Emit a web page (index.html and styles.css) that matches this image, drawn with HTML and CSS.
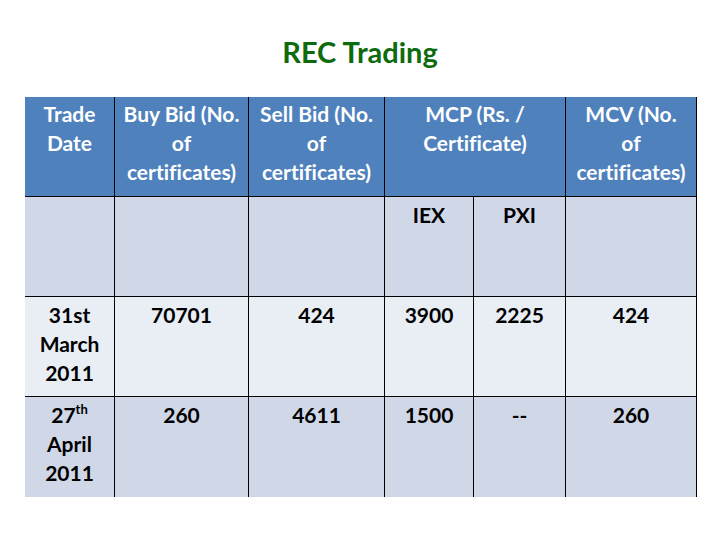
FILE: index.html
```html
<!DOCTYPE html>
<html lang="en">
<head>
<meta charset="utf-8">
<title>REC Trading</title>
<link rel="stylesheet" href="styles.css">
</head>
<body>
<main class="slide">
  <h1 class="title">REC Trading</h1>
  <table class="rec">
    <colgroup>
      <col class="c1"><col class="c2"><col class="c3"><col class="c4"><col class="c5"><col class="c6">
    </colgroup>
    <thead>
      <tr class="head">
        <th>Trade<br>Date</th>
        <th>Buy Bid (No.<br>of<br>certificates)</th>
        <th>Sell Bid (No.<br>of<br>certificates)</th>
        <th colspan="2">MCP (Rs. /<br>Certificate)</th>
        <th>MCV (No.<br>of<br>certificates)</th>
      </tr>
    </thead>
    <tbody>
      <tr class="sub dark">
        <td></td><td></td><td></td><td>IEX</td><td>PXI</td><td></td>
      </tr>
      <tr class="light">
        <td>31st<br>March<br>2011</td><td>70701</td><td>424</td><td>3900</td><td>2225</td><td>424</td>
      </tr>
      <tr class="dark last">
        <td>27<sup>th</sup><br>April<br>2011</td><td>260</td><td>4611</td><td>1500</td><td>--</td><td>260</td>
      </tr>
    </tbody>
  </table>
</main>
</body>
</html>
```

FILE: styles.css
```css
html, body {
  margin: 0;
  padding: 0;
  background: #ffffff;
}

.slide {
  width: 720px;
  height: 540px;
  box-sizing: border-box;
  padding: 34px 0 0 25px;
  font-family: Lato, "Open Sans", sans-serif;
  font-variant-ligatures: none;
}

.title {
  margin: 0 0 0 -25px;
  width: 720px;
  text-align: center;
  font-size: 29px;
  line-height: 36px;
  font-weight: 700;
  color: #0d6a0d;
  height: 63px;
}

.rec {
  border-collapse: separate;
  border-spacing: 0;
  table-layout: fixed;
  width: 672px;
  font-size: 21px;
  font-weight: 700;
  line-height: 29px;
}

.c1 { width: 90px; }
.c2 { width: 134px; }
.c3 { width: 136px; }
.c4 { width: 89px; }
.c5 { width: 92px; }
.c6 { width: 131px; }

.rec th,
.rec td {
  box-sizing: border-box;
  padding: 2px 0 0;
  text-align: center;
  vertical-align: top;
  border-right: 1px solid #000;
  border-bottom: 1px solid #000;
  white-space: nowrap;
}

.rec th {
  color: #ffffff;
  background: #4f81bd;
  font-weight: 700;
}

.head { height: 100px; }
.sub { height: 101px; }
.light, .dark { height: 100px; }

.rec td {
  color: #000;
  padding-top: 3px;
}

.dark td { background: #d0d8e8; }
.light td { background: #e9edf4; }

.last td { border-bottom: none; }

.rec sup {
  font-size: 13px;
  line-height: 0;
  vertical-align: 9px;
}
```
